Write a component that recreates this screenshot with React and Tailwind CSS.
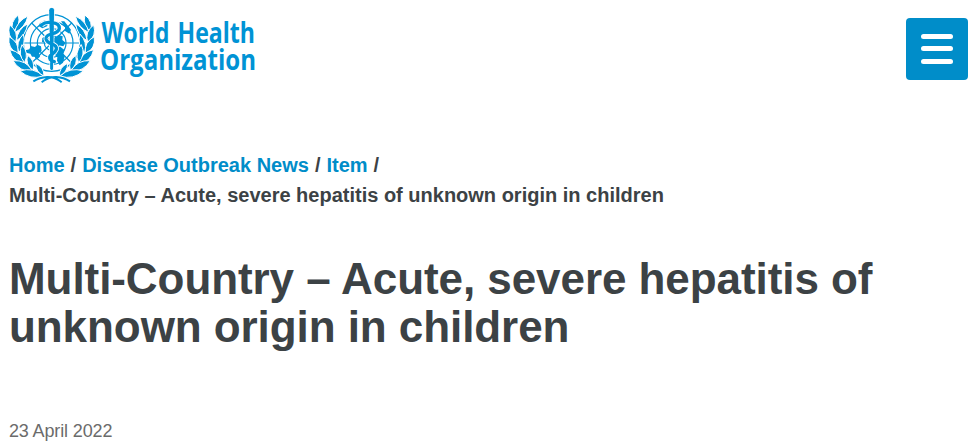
import React from 'react';

// each leaf is [tipX, tipY, baseX, baseY, width] for the left branch
const leaves = [
  [55, 45, 38, 96, 18],
  [84, 48, 43, 98, 16],
  [29, 75, 47, 128, 20],
  [83, 71, 49, 122, 16],
  [27, 110, 54, 162, 21],
  [70, 102, 56, 158, 17],
  [29, 149, 74, 192, 21],
  [66, 134, 74, 188, 18],
  [39, 182, 98, 213, 21],
  [83, 166, 99, 211, 17],
  [60, 213, 130, 228, 21],
  [107, 190, 132, 228, 15],
];

const leafPath = ([tx, ty, bx, by, w]) => {
  const dx = bx - tx;
  const dy = by - ty;
  const len = Math.hypot(dx, dy);
  const nx = (-dy / len) * w;
  const ny = (dx / len) * w;
  const mx = tx + dx * 0.5;
  const my = ty + dy * 0.5;
  return `M${tx} ${ty}Q${mx + nx} ${my + ny} ${bx} ${by}Q${mx - nx} ${my - ny} ${tx} ${ty}Z`;
};

const Branch = () => (
  <g>
    {leaves.map((leaf, i) => (
      <path key={i} d={leafPath(leaf)} stroke="white" strokeWidth="3" />
    ))}
  </g>
);

const Emblem = () => (
  <svg className="h-[77px] w-[86px] shrink-0" viewBox="27 21 258 231" fill="currentColor" aria-hidden="true">
    {/* Globe grid */}
    <g fill="none" stroke="currentColor" strokeWidth="3.6">
      <circle cx="155" cy="129" r="85" />
      <circle cx="155" cy="129" r="64" />
      <circle cx="155" cy="129" r="43" />
      <circle cx="155" cy="129" r="22" />
      <path d="M70 129H240M95 69L215 189M215 69L95 189M155 44V214" />
    </g>

    {/* Continents */}
    <path d="M76 151L88 148 92 138 105 141 112 134 123 139 125 153 117 160 120 170 110 179 104 170 96 170 91 161 78 158Z" />
    <path d="M120 68L135 60 147 66 141 79 127 85 117 79Z" />
    <path d="M127 114L143 106 149 119 139 130 126 126Z" />
    <path d="M162 113L176 105 188 109 187 120 197 128 190 139 176 136 168 141 160 131Z" />
    <path d="M162 140L181 140 194 151 190 162 194 170 189 188 179 196 171 182 172 171 162 163Z" />
    <path d="M183 64L193 64 213 89 208 101 195 93 195 82Z" />

    {/* Laurel branches */}
    <Branch />
    <g transform="matrix(-1 0 0 1 310 0)">
      <Branch />
    </g>
    <path
      d="M100 244Q119 232 141 231Q162 230 180 243L185 247M210 244Q191 232 169 231Q148 230 130 243L125 247"
      fill="none"
      stroke="currentColor"
      strokeWidth="6"
    />

    {/* Staff and serpent */}
    <path d="M147 31Q147 23 155 23Q163 23 163 31L160 208Q155 214 150 208Z" stroke="white" strokeWidth="3" />
    <path
      d="M124 75Q137 64 155 68Q179 70 178 86Q176 97 155 102Q137 106 138 117Q140 127 156 132Q171 137 169 148Q165 158 155 164Q146 169 151 179Q155 183 163 185"
      fill="none"
      stroke="white"
      strokeWidth="15"
    />
    <path
      d="M124 75Q137 64 155 68Q179 70 178 86Q176 97 155 102Q137 106 138 117Q140 127 156 132Q171 137 169 148Q165 158 155 164Q146 169 151 179Q155 183 163 185"
      fill="none"
      stroke="currentColor"
      strokeWidth="10"
      strokeLinecap="round"
    />
    <path d="M148 31Q148 24 155 24Q162 24 162 31L159 207Q155 213 151 207Z" />
  </svg>
);

const Logo = () => (
  <a href="#" className="flex text-[#0093d5]" aria-label="World Health Organization">
    <Emblem />
    <svg
      className="ml-[3px] h-[77px] w-[165px] overflow-visible font-['Open_Sans','Noto_Sans',sans-serif] text-[29px] font-bold"
      viewBox="-2 0 165 77"
      fill="currentColor"
    >
      <text x="1.5" y="36" textLength="68" lengthAdjust="spacingAndGlyphs">World</text>
      <text x="77.5" y="36" textLength="77.5" lengthAdjust="spacingAndGlyphs">Health</text>
      <text x="0" y="63" textLength="156" lengthAdjust="spacingAndGlyphs">Organization</text>
    </svg>
  </a>
);

const MenuButton = () => (
  <button
    className="mt-[11px] flex h-[62px] w-[62px] flex-col items-center rounded-[4px] bg-[#008dc9] pt-4"
    aria-label="Menu"
  >
    <span className="h-[5px] w-8 rounded-full bg-white" />
    <span className="mt-[7px] h-[5px] w-8 rounded-full bg-white" />
    <span className="mt-2 h-[5px] w-8 rounded-full bg-white" />
  </button>
);

const App = () => {
  return (
    <div className="h-[447px] overflow-hidden bg-white pl-[9px] pr-[7px] pt-[7px] font-['Liberation_Sans',Arial,sans-serif] text-[#3c4245]">
      <header className="flex h-[143px] items-start justify-between">
        <Logo />
        <MenuButton />
      </header>

      <nav className="text-[20px] leading-[30px] font-bold">
        <div>
          <a href="#" className="text-[#008dc9]">Home</a>
          <span className="mx-1.5">/</span>
          <a href="#" className="text-[#008dc9]">Disease Outbreak News</a>
          <span className="mx-1.5">/</span>
          <a href="#" className="text-[#008dc9]">Item</a>
          <span className="ml-1.5">/</span>
        </div>
        <div>Multi-Country – Acute, severe hepatitis of unknown origin in children</div>
      </nav>

      <h1 className="mt-[45px] text-[44px] leading-[48px] font-bold tracking-[-0.07px]">
        Multi-Country – Acute, severe hepatitis of
        <br />
        unknown origin in children
      </h1>

      <p className="mt-[68px] text-[18px] leading-6 tracking-[-0.14px] text-[#6b6b6b]">23 April 2022</p>
    </div>
  );
};

export default App;
